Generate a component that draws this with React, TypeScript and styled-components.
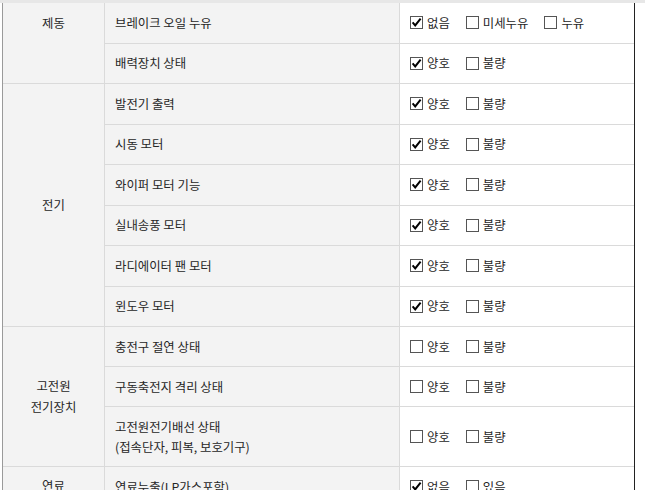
import styled, { createGlobalStyle } from "styled-components";

const GlobalStyle = createGlobalStyle`
  html, body {
    margin: 0;
    padding: 0;
    background: #fff;
    overflow: hidden;
  }
  body {
    font-family: "Noto Sans CJK KR", "Noto Sans", sans-serif;
    font-size: 12.4px;
    color: #262626;
  }
`;

type Item = { label: string; lines?: string[]; options: string[]; checked?: number; tall?: boolean };
type Group = { title: string[]; top?: boolean; items: Item[] };

const GOOD = ["양호", "불량"];

const groups: Group[] = [
  {
    title: ["제동"],
    top: true,
    items: [
      { label: "브레이크 오일 누유", options: ["없음", "미세누유", "누유"], checked: 0 },
      { label: "배력장치 상태", options: GOOD, checked: 0 },
    ],
  },
  {
    title: ["전기"],
    items: [
      { label: "발전기 출력", options: GOOD, checked: 0 },
      { label: "시동 모터", options: GOOD, checked: 0 },
      { label: "와이퍼 모터 기능", options: GOOD, checked: 0 },
      { label: "실내송풍 모터", options: GOOD, checked: 0 },
      { label: "라디에이터 팬 모터", options: GOOD, checked: 0 },
      { label: "윈도우 모터", options: GOOD, checked: 0 },
    ],
  },
  {
    title: ["고전원", "전기장치"],
    items: [
      { label: "충전구 절연 상태", options: GOOD },
      { label: "구동축전지 격리 상태", options: GOOD },
      {
        label: "고전원전기배선 상태",
        lines: ["고전원전기배선 상태", "(접속단자, 피복, 보호기구)"],
        options: GOOD,
        tall: true,
      },
    ],
  },
  {
    title: ["연료"],
    items: [{ label: "연료누출(LP가스포함)", options: ["없음", "있음"], checked: 0 }],
  },
];

const TopStrip = styled.div`
  height: 3px;
  background: #e7e7e7;
`;

const Frame = styled.div`
  margin-left: 2px;
  width: 631px;
  border-left: 1px solid #9a9a9a;
  border-right: 1px solid #222;
`;

const Grid = styled.div<{ $rows: string }>`
  display: grid;
  grid-template-columns: 101px 294px 234px;
  grid-template-rows: ${(p) => p.$rows};
  gap: 1px;
  background: #dadada;
`;

const GroupCell = styled.div<{ $span: number; $top?: boolean }>`
  grid-column: 1;
  grid-row: span ${(p) => p.$span};
  background: #f3f3f3;
  display: flex;
  flex-direction: column;
  align-items: center;
  justify-content: ${(p) => (p.$top ? "flex-start" : "center")};
  padding-top: ${(p) => (p.$top ? "10px" : "0")};
  line-height: 21px;
  text-align: center;
`;

const LabelCell = styled.div`
  grid-column: 2;
  background: #f3f3f3;
  display: flex;
  flex-direction: column;
  justify-content: center;
  padding-left: 10px;
  line-height: 20px;
`;

const OptionCell = styled.div`
  grid-column: 3;
  background: #fff;
  display: flex;
  align-items: center;
  padding-left: 10px;
`;

const Option = styled.label`
  display: flex;
  align-items: center;
  margin-right: 16px;
  line-height: 20px;
`;

const Box = styled.span`
  width: 11px;
  height: 11px;
  border: 1px solid #555;
  background: #fff;
  margin-right: 4px;
  display: flex;
  align-items: center;
  justify-content: center;
`;

const Check = () => (
  <svg width="11" height="11" viewBox="0 0 11 11">
    <path d="M1.6 5.4 L4.2 8.4 L9.6 1.6" fill="none" stroke="#000" strokeWidth="2" />
  </svg>
);

const rowHeights = groups
  .flatMap((g, gi) =>
    g.items.map((it) => (it.tall ? "59px" : gi === 2 ? "39px" : "39.5px"))
  )
  .join(" ");

export default function App() {
  return (
    <>
      <GlobalStyle />
      <TopStrip />
      <Frame>
        <Grid $rows={rowHeights}>
          {groups.map((g) => [
            <GroupCell key={g.title.join()} $span={g.items.length} $top={g.top}>
              {g.title.map((t) => (
                <div key={t}>{t}</div>
              ))}
            </GroupCell>,
            ...g.items.flatMap((it) => [
              <LabelCell key={it.label + "-l"}>
                {(it.lines ?? [it.label]).map((l) => (
                  <div key={l}>{l}</div>
                ))}
              </LabelCell>,
              <OptionCell key={it.label + "-o"}>
                {it.options.map((o, i) => (
                  <Option key={o}>
                    <Box>{it.checked === i && <Check />}</Box>
                    {o}
                  </Option>
                ))}
              </OptionCell>,
            ]),
          ])}
        </Grid>
      </Frame>
    </>
  );
}
